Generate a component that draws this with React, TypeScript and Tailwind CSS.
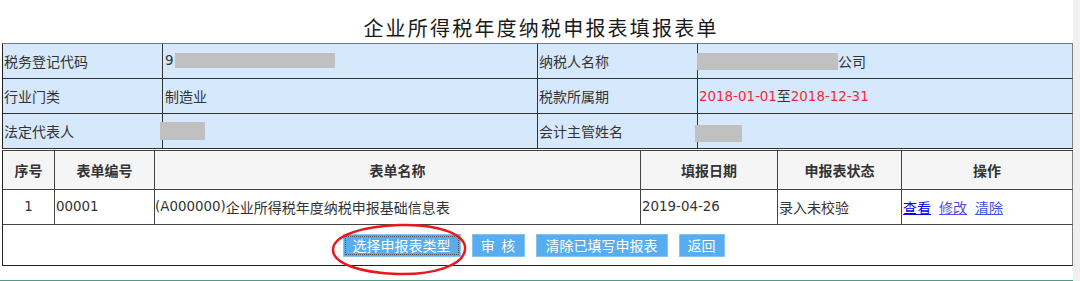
import React from 'react';

const infoRows = [
  { label: '税务登记代码', value: 'code', label2: '纳税人名称', value2: 'name' },
  { label: '行业门类', value: 'industry', label2: '税款所属期', value2: 'period' },
  { label: '法定代表人', value: 'legal', label2: '会计主管姓名', value2: 'account' },
];

// latin digits in the original are wider than the CJK font's own
function L({ children, className = '' }: { children: React.ReactNode; className?: string }) {
  return <span className={"font-['DejaVu_Sans',sans-serif] text-[13.4px] " + className}>{children}</span>;
}

function Redact({ className }: { className: string }) {
  return <span className={'inline-block bg-[#c0c0c0] align-middle ' + className} aria-hidden />;
}

function InfoValue({ kind }: { kind: string }) {
  if (kind === 'code')
    return (
      <span className="flex items-center">
        <L>9</L>
        <Redact className="ml-[1px] h-[15px] w-[160px]" />
      </span>
    );
  if (kind === 'industry') return <span>制造业</span>;
  if (kind === 'legal') return <Redact className="-ml-[5px] h-[18px] w-[45px]" />;
  if (kind === 'name')
    return (
      <span className="flex items-center">
        <Redact className="-ml-[2px] h-[17px] w-[141px]" />
        公司
      </span>
    );
  if (kind === 'period')
    return (
      <span>
        <L className="text-[#f5283c]">2018-01-01</L>至<L className="text-[#f5283c]">2018-12-31</L>
      </span>
    );
  return <Redact className="-ml-[4px] mt-[4px] h-[17px] w-[47px]" />;
}

const headers = ['序号', '表单编号', '表单名称', '填报日期', '申报表状态', '操作'];

export default function App() {
  const cell = 'flex h-[35px] items-center border-b border-r border-[#333] px-[1px]';
  const mainCell = 'flex items-center border-b border-r border-[#444]';
  const btn = 'h-[23px] border border-[#86c3f2] bg-[#58adf0] leading-[20px] text-white';

  return (
    <div className="relative h-[281px] w-[1080px] overflow-hidden bg-white font-['Noto_Sans_CJK_SC','Noto_Sans',sans-serif] text-[14px] text-[#333]">
      <div className="flex">
        <div className="w-[1073px]">
          <div className="flex h-[43px] items-start justify-center pl-[9px] pt-[13px]">
            <h1 className="text-[20px] font-normal leading-[30px] tracking-[2.2px] text-[#1a1a1a]">
              企业所得税年度纳税申报表填报表单
            </h1>
          </div>

          <div className="ml-[2px] grid w-[1071px] grid-cols-[160px_375px_160px_375px] border-l border-t border-l-[#222] border-t-[#7a7a7a] bg-[#d6e9fc]">
            {infoRows.map((row) => (
              <React.Fragment key={row.label}>
                <div className={cell}>{row.label}</div>
                <div className={cell + ' pl-[2px]'}>
                  <InfoValue kind={row.value} />
                </div>
                <div className={cell}>{row.label2}</div>
                <div className={cell + ' border-r-[#808080]'}>
                  <InfoValue kind={row.value2} />
                </div>
              </React.Fragment>
            ))}
          </div>

          <div className="ml-[2px] mt-[1px] grid w-[1071px] grid-cols-[52px_100px_486px_137px_124px_171px] border-l border-t border-l-[#222] border-t-[#444]">
            {headers.map((h, i) => (
              <div
                key={h}
                className={
                  mainCell +
                  ' h-[39px] justify-center bg-[#f5f5f5] font-bold' +
                  (i === 5 ? ' border-r-[#808080]' : '')
                }
              >
                {h}
              </div>
            ))}

            <div className={mainCell + ' h-[35px] justify-center'}>
              <L>1</L>
            </div>
            <div className={mainCell + ' h-[35px] pl-[1px]'}>
              <L>00001</L>
            </div>
            <div className={mainCell + ' h-[35px]'}>
              <L>(A000000)</L>企业所得税年度纳税申报基础信息表
            </div>
            <div className={mainCell + ' h-[35px] pl-[1px]'}>
              <L>2019-04-26</L>
            </div>
            <div className={mainCell + ' h-[35px] pl-[1px]'}>录入未校验</div>
            <div className={mainCell + ' h-[35px] gap-[8px] border-r-[#808080] pl-[1px]'}>
              <a href="#" className="text-[#0000ee] underline">查看</a>
              <a href="#" className="text-[#5a4ce0] underline">修改</a>
              <a href="#" className="text-[#3a50e6] underline">清除</a>
            </div>

            <div className="col-span-6 flex h-[41px] items-center justify-center gap-[11px] border-b border-r border-b-[#222] border-r-[#808080] pr-[8px]">
              <button
                type="button"
                className={btn + ' px-[9px] outline-1 -outline-offset-3 outline-dotted outline-[#555]'}
              >
                选择申报表类型
              </button>
              <button type="button" className={btn + ' w-[53px]'}>
                审&nbsp;&nbsp;核
              </button>
              <button type="button" className={btn + ' px-[9px]'}>
                清除已填写申报表
              </button>
              <button type="button" className={btn + ' px-[8px]'}>
                返回
              </button>
            </div>
          </div>

          <div className="mt-[14px] h-[1px] bg-[#4e9c86]" />
        </div>
        <div className="h-[281px] w-[7px] bg-[#f0f0f0]" />
      </div>

      <svg className="pointer-events-none absolute left-[328px] top-[222px]" width="142" height="56" viewBox="0 0 142 56">
        <path
          d="M72 3 C 110 2, 139 12, 137 28 C 135 44, 104 53, 70 52 C 34 51, 4 42, 5 27 C 6 13, 36 4, 72 3 Z"
          fill="none"
          stroke="#e51a20"
          strokeWidth="2.5"
        />
      </svg>
    </div>
  );
}
